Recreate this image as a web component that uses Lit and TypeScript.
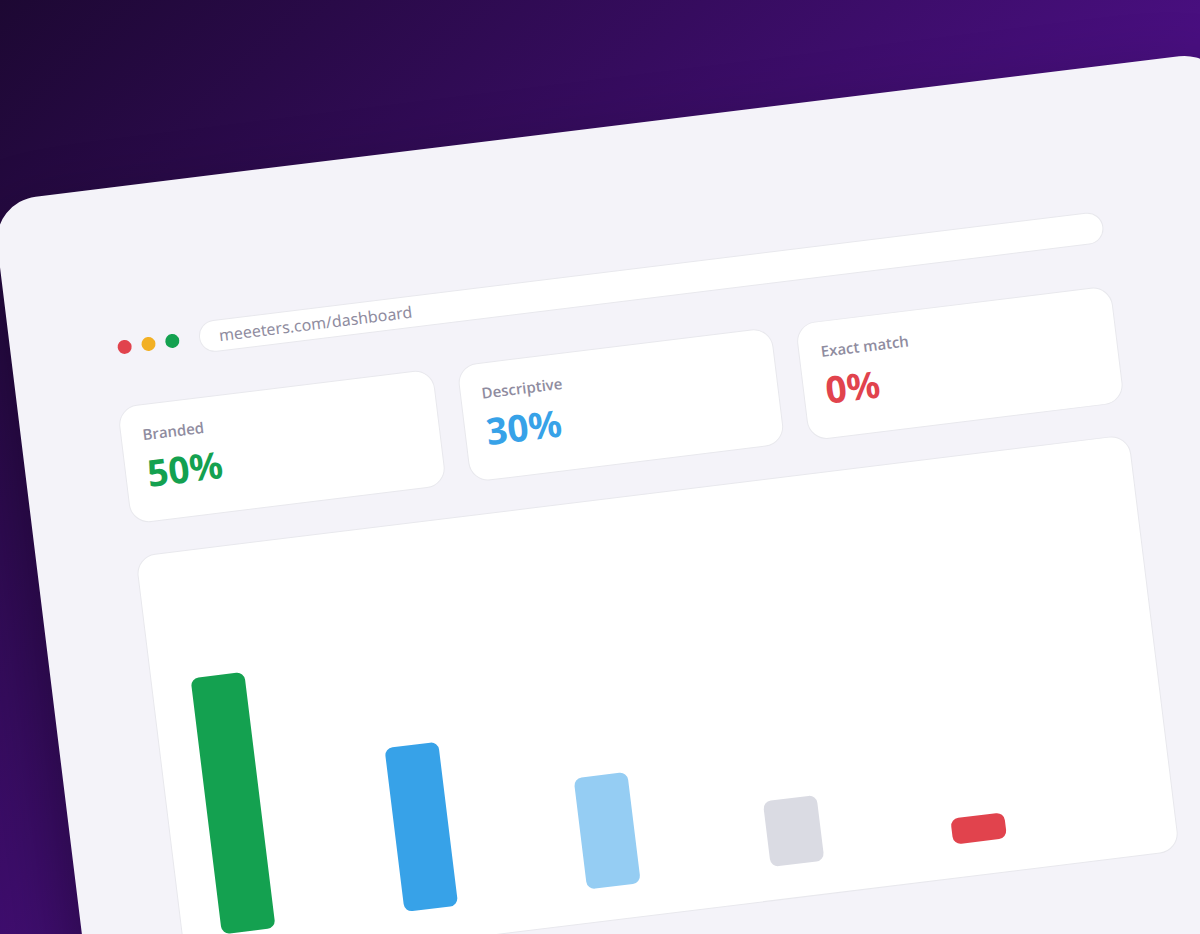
import { LitElement, html, css } from "lit";
import { customElement } from "lit/decorators.js";
import { styleMap } from "lit/directives/style-map.js";

interface Stat {
  label: string;
  value: string;
  tone: string;
}

interface Bar {
  label: string;
  height: number;
  tone: string;
}

const STATS: Stat[] = [
  { label: "Branded", value: "50%", tone: "green" },
  { label: "Descriptive", value: "30%", tone: "blue" },
  { label: "Exact match", value: "0%", tone: "red" },
];

const BARS: Bar[] = [
  { label: "50%", height: 258, tone: "green" },
  { label: "30%", height: 165, tone: "blue" },
  { label: "20%", height: 112, tone: "sky" },
  { label: "10%", height: 66, tone: "grey" },
  { label: "0%", height: 26, tone: "red" },
];

@customElement("stat-cards")
class StatCards extends LitElement {
  static styles = css`
    :host {
      display: block;
    }
    .cards {
      display: grid;
      grid-template-columns: repeat(3, 1fr);
      gap: 24px;
      margin: 0;
    }
    .card {
      box-sizing: border-box;
      padding: 18px 21px 24px;
      background: #fff;
      border: 1px solid #e8e8ed;
      border-radius: 20px;
    }
    .label {
      margin: 0 0 4px;
      font-family: "Open Sans", "Noto Sans", sans-serif;
      font-size: 15px;
      line-height: 22px;
      font-weight: 600;
      color: #8f8ca0;
    }
    .value {
      margin: 0;
      font-size: 37px;
      line-height: 48px;
      font-weight: 700;
    }
    .green {
      color: #14a150;
    }
    .blue {
      color: #37a2e8;
    }
    .red {
      color: #e1434d;
    }
  `;

  render() {
    return html`<dl class="cards">
      ${STATS.map(
        (s) => html`<div class="card">
          <dt class="label">${s.label}</dt>
          <dd class="value ${s.tone}">${s.value}</dd>
        </div>`
      )}
    </dl>`;
  }
}

@customElement("bar-chart")
class BarChart extends LitElement {
  static styles = css`
    :host {
      display: block;
    }
    .chart {
      display: grid;
      grid-template-columns: repeat(5, 1fr);
      align-items: end;
      box-sizing: border-box;
      min-height: 420px;
      margin: 0;
      padding: 33px 39px;
      background: #fff;
      border: 1px solid #e8e8ed;
      border-radius: 20px;
    }
    .bar {
      width: 54px;
      border-radius: 8px;
    }
    .green {
      background: #14a150;
    }
    .blue {
      background: #37a2e8;
    }
    .sky {
      background: #95cdf3;
    }
    .grey {
      background: #dadbe3;
    }
    .red {
      background: #e1434d;
    }
  `;

  render() {
    return html`<div class="chart">
      ${BARS.map(
        (b) => html`<div
          class="bar ${b.tone}"
          role="img"
          aria-label=${b.label}
          style=${styleMap({ height: `${b.height}px` })}
        ></div>`
      )}
    </div>`;
  }
}

@customElement("app-root")
class AppRoot extends LitElement {
  static styles = css`
    :host {
      display: flow-root;
      height: 100vh;
      overflow: hidden;
      font-family: "Noto Sans", "Open Sans", sans-serif;
      background: linear-gradient(135deg, #1d0833 0%, #490f80 58%);
    }
    .window {
      display: flex;
      flex-direction: column;
      box-sizing: border-box;
      width: calc(100% + 40px);
      margin: 202px 0 0 -8px;
      padding: 144px 140px 144px 99px;
      background: #f4f3f9;
      border-radius: 44px;
      box-shadow: 0 40px 80px rgba(0, 0, 0, 0.45);
      transform: rotate(-7deg);
      transform-origin: 0 0;
    }
    .bar {
      display: flex;
      align-items: center;
      gap: 20px;
      padding-left: 8px;
      margin-bottom: 43px;
    }
    .dots {
      display: flex;
      gap: 10px;
    }
    .dot {
      width: 14px;
      height: 14px;
      border-radius: 50%;
    }
    .close {
      background: #e1434d;
    }
    .minimise {
      background: #f2b024;
    }
    .expand {
      background: #14a150;
    }
    .address {
      flex: 1;
      min-width: 0;
      box-sizing: border-box;
      height: 32px;
      padding: 0 19px;
      font: 400 16px/24px "Noto Sans", "Open Sans", sans-serif;
      color: #8f8ca0;
      background: #fff;
      border: 1px solid #e8e8ed;
      border-radius: 16px;
      outline: none;
    }
    .chart {
      margin-top: 32px;
    }
  `;

  render() {
    return html`<main class="window">
      <div class="bar">
        <div class="dots">
          <span class="dot close"></span>
          <span class="dot minimise"></span>
          <span class="dot expand"></span>
        </div>
        <input
          class="address"
          type="text"
          aria-label="Address"
          .value=${"meeeters.com/dashboard"}
        />
      </div>
      <stat-cards></stat-cards>
      <bar-chart class="chart"></bar-chart>
    </main>`;
  }
}
